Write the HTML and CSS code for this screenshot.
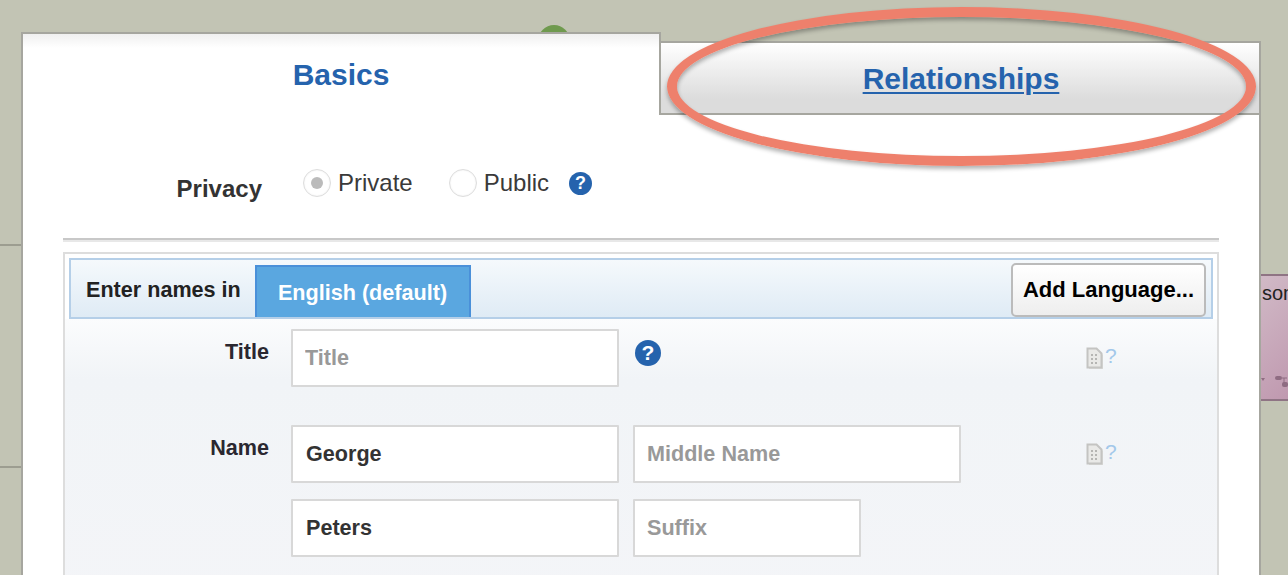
FILE: index.html
```html
<!DOCTYPE html>
<html lang="en">
<head>
  <meta charset="UTF-8">
  <title>Edit Person</title>
  <link rel="stylesheet" href="styles.css">
</head>
<body>
  <!-- tree canvas behind the dialog -->
  <div class="tree-line tree-line-top"></div>
  <div class="tree-line tree-line-bottom"></div>
  <div class="tree-node-green"></div>
  <div class="tree-card">
    <span class="tree-card-text">someone</span>
    <svg class="tree-card-icon" width="28" height="14" viewBox="0 0 28 14">
      <path d="M1 4h4l-2 3z" fill="#8f6c82"/>
      <rect x="15" y="2" width="7" height="4" rx="2" fill="#8f6c82"/>
      <path d="M22 4h5M24 4v5" stroke="#8f6c82" fill="none"/>
      <rect x="22" y="8" width="6" height="5" rx="2" fill="#8f6c82"/>
    </svg>
  </div>

  <div class="dialog">
    <div class="tabs">
      <div class="tab tab-active">Basics</div>
      <div class="tab tab-inactive"><a href="#">Relationships</a></div>
    </div>

    <div class="dialog-body">
      <div class="privacy-row">
        <div class="privacy-label">Privacy</div>
        <div class="radio-group">
          <span class="radio radio-on"></span><span class="radio-text">Private</span>
          <span class="radio radio-second"></span><span class="radio-text">Public</span>
          <span class="help help-small">?</span>
        </div>
      </div>
      <div class="divider"></div>

      <div class="panel">
        <div class="lang-bar">
          <div class="lang-label">Enter names in</div>
          <div class="lang-tab">English (default)</div>
          <button class="add-lang">Add Language...</button>
        </div>

        <div class="form-rows">
          <div class="form-row row-title">
            <label class="field-label">Title</label>
            <div class="field-group">
              <input class="field field-wide" type="text" placeholder="Title">
              <span class="help help-big">?</span>
            </div>
            <span class="source-link">
              <svg width="18" height="23" viewBox="0 0 18 23">
                <path d="M3 3h9l5 5v14H3z" fill="#dcdcda"/>
                <path d="M1.5 1.5h9l5 5v14h-14z" fill="#e9e9e7" stroke="#c4c4c2" stroke-width="2"/>
                <path d="M5 7h2v2H5zM9 7h2v2H9zM5 11h2v2H5zM9 11h2v2H9zM5 15h2v2H5zM9 15h2v2H9z" fill="#b5b5b3"/>
              </svg><span class="source-mark">?</span>
            </span>
          </div>

          <div class="form-row row-name">
            <label class="field-label">Name</label>
            <div class="field-group">
              <input class="field field-wide field-filled" type="text" value="George">
              <input class="field field-wide" type="text" placeholder="Middle Name">
            </div>
            <span class="source-link">
              <svg width="18" height="23" viewBox="0 0 18 23">
                <path d="M3 3h9l5 5v14H3z" fill="#dcdcda"/>
                <path d="M1.5 1.5h9l5 5v14h-14z" fill="#e9e9e7" stroke="#c4c4c2" stroke-width="2"/>
                <path d="M5 7h2v2H5zM9 7h2v2H9zM5 11h2v2H5zM9 11h2v2H9zM5 15h2v2H5zM9 15h2v2H9z" fill="#b5b5b3"/>
              </svg><span class="source-mark">?</span>
            </span>
          </div>

          <div class="form-row row-last">
            <label class="field-label"></label>
            <div class="field-group">
              <input class="field field-wide field-filled" type="text" value="Peters">
              <input class="field field-short" type="text" placeholder="Suffix">
            </div>
          </div>
        </div>
      </div>
    </div>
  </div>

  <!-- callout drawn over the screenshot -->
  <div class="callout"></div>
</body>
</html>
```

FILE: styles.css
```css
html, body {
  height: 575px;
  overflow: hidden;
}
body {
  margin: 0;
  position: relative;
  background: #c2c4b4;
  font-family: "Liberation Sans", Arial, sans-serif;
  color: #333;
}

/* tree behind dialog */
.tree-line {
  position: absolute;
  left: 0;
  width: 30px;
  height: 2px;
  background: #9c9d90;
}
.tree-line-top {
  top: 244px;
}
.tree-line-bottom {
  top: 466px;
}
.tree-node-green {
  position: absolute;
  left: 538px;
  top: 25px;
  width: 32px;
  height: 32px;
  border-radius: 50%;
  background: #6f9a4e;
}
.tree-card {
  position: absolute;
  left: 1250px;
  top: 274px;
  width: 60px;
  height: 127px;
  box-sizing: border-box;
  border-top: 2px solid #8f7484;
  border-bottom: 2px solid #8f7484;
  background: linear-gradient(135deg, #d2bcc8, #bd94ac);
  overflow: hidden;
}
.tree-card-text {
  position: absolute;
  left: 12px;
  top: 6px;
  font-size: 20px;
  color: #222;
}
.tree-card-icon {
  position: absolute;
  left: 10px;
  top: 98px;
}

/* dialog */
.dialog {
  position: relative;
  margin: 32px 0 0 21px;
  width: 1240px;
}
.tabs {
  display: flex;
  height: 83px;
}
.tab {
  box-sizing: border-box;
  text-align: center;
  font-size: 30px;
  font-weight: bold;
  color: #2563ad;
}
.tab-active {
  flex: 0 0 640px;
  border-top: 2px solid #a6a69f;
  border-left: 2px solid #a6a69f;
  border-right: 2px solid #a6a69f;
  background: linear-gradient(#f0f0f0, #fff 14px);
  padding-top: 24px;
  line-height: 34px;
}
.tab-inactive {
  flex: 1;
  margin-top: 9px;
  border: 2px solid #a6a69f;
  border-left: 0;
  background: linear-gradient(#fff, #dcdcdc 80%);
  line-height: 72px;
  padding-left: 2px;
}
.tab-inactive a {
  color: #2563ad;
  text-decoration-thickness: 2px;
  text-underline-offset: 3px;
}
.dialog-body {
  height: 460px;
  box-sizing: border-box;
  border-left: 2px solid #a6a69f;
  border-right: 2px solid #a6a69f;
  background: #fff;
  padding: 54px 40px 0;
  overflow: hidden;
}

/* privacy */
.privacy-row {
  display: flex;
  height: 69px;
}
.privacy-label {
  width: 199px;
  text-align: right;
  font-size: 24px;
  font-weight: bold;
  line-height: 28px;
  padding-top: 6px;
}
.radio-group {
  display: flex;
  align-items: center;
  height: 28px;
  margin-left: 41px;
  font-size: 24px;
  color: #3a3a3a;
}
.radio {
  box-sizing: border-box;
  width: 28px;
  height: 28px;
  border: 1px solid #ddd;
  border-radius: 50%;
  background: #fff;
  box-shadow: inset 0 0 2px #e8e8e8;
  display: flex;
  align-items: center;
  justify-content: center;
}
.radio-on::after {
  content: "";
  width: 12px;
  height: 12px;
  border-radius: 50%;
  background: #bbb;
}
.radio-text {
  margin-left: 7px;
}
.radio-second {
  margin-left: 36px;
}
.help {
  display: inline-block;
  border-radius: 50%;
  background: #2563ad;
  color: #fff;
  font-weight: bold;
  text-align: center;
}
.help-small {
  width: 23px;
  height: 23px;
  line-height: 23px;
  font-size: 18px;
  margin-left: 20px;
}
.help-big {
  width: 26px;
  height: 26px;
  line-height: 26px;
  font-size: 21px;
  margin: 11px 0 0 2px;
}
.divider {
  height: 2px;
  background: #c8c8c8;
  border-bottom: 2px solid #e8e8e8;
  margin-bottom: 10px;
}

/* names panel */
.panel {
  height: 400px;
  border: 2px solid #ddd;
  border-bottom: 0;
  padding: 4px 4px 0;
  font-size: 21.6px;
}
.lang-bar {
  display: flex;
  align-items: flex-end;
  box-sizing: border-box;
  height: 61px;
  border: 2px solid #b5cfe8;
  background: linear-gradient(#f5f9fc, #dfebf5);
  padding-left: 15px;
}
.lang-label {
  font-weight: bold;
  color: #222;
  width: 169px;
  align-self: flex-start;
  padding-top: 17px;
  line-height: 25px;
}
.lang-tab {
  box-sizing: border-box;
  width: 216px;
  height: 52px;
  border: 2px solid #4a90d9;
  border-bottom: 0;
  background: #5aa7e0;
  color: #fff;
  font-weight: bold;
  text-align: center;
  line-height: 52px;
  padding-right: 1px;
}
.add-lang {
  box-sizing: border-box;
  width: 195px;
  height: 54px;
  margin: 3px 5px 0 auto;
  align-self: flex-start;
  border: 2px solid #bbb;
  border-radius: 5px;
  background: linear-gradient(#fff, #eee);
  color: #000;
  font: bold 22px "Liberation Sans", Arial, sans-serif;
  padding: 0;
}

.form-rows {
  background: linear-gradient(#fbfcfd, #f1f4f7 60px, #f4f5f8);
  margin: 0 -4px;
  padding: 10px 4px 0;
  height: 300px;
}
.form-row {
  display: flex;
  align-items: flex-start;
}
.row-title {
  margin-bottom: 38px;
}
.row-name {
  margin-bottom: 16px;
}
.field-label {
  width: 200px;
  text-align: right;
  font-weight: bold;
  color: #2a2730;
  padding-top: 10px;
  line-height: 25px;
  flex-shrink: 0;
}
.field-group {
  display: flex;
  align-items: flex-start;
  margin-left: 22px;
  gap: 14px;
  width: 670px;
}
.field {
  box-sizing: border-box;
  height: 58px;
  border: 2px solid #d8d8d8;
  background: #fff;
  padding: 0 12px;
  font: bold 21.6px "Liberation Sans", Arial, sans-serif;
  color: #333;
  outline: none;
  border-radius: 1px;
}
.field-filled {
  padding-left: 13px;
}
.field::placeholder {
  color: #999;
  opacity: 1;
}
.field-wide {
  width: 328px;
}
.field-short {
  width: 228px;
}
.source-link {
  display: flex;
  align-items: flex-start;
  margin: 18px 0 0 125px;
}
.source-mark {
  color: #a3c8ea;
  font-size: 21px;
  line-height: 20px;
  margin: -1px 0 0 1px;
}

/* red ring from the screenshot annotation */
.callout {
  position: absolute;
  left: 667px;
  top: 7px;
  width: 589px;
  height: 159px;
  box-sizing: border-box;
  border: 10px solid #ee806c;
  border-radius: 50%;
  box-shadow: 0 3px 4px rgba(0,0,0,0.3), inset 0 3px 4px rgba(0,0,0,0.3);
}
```
